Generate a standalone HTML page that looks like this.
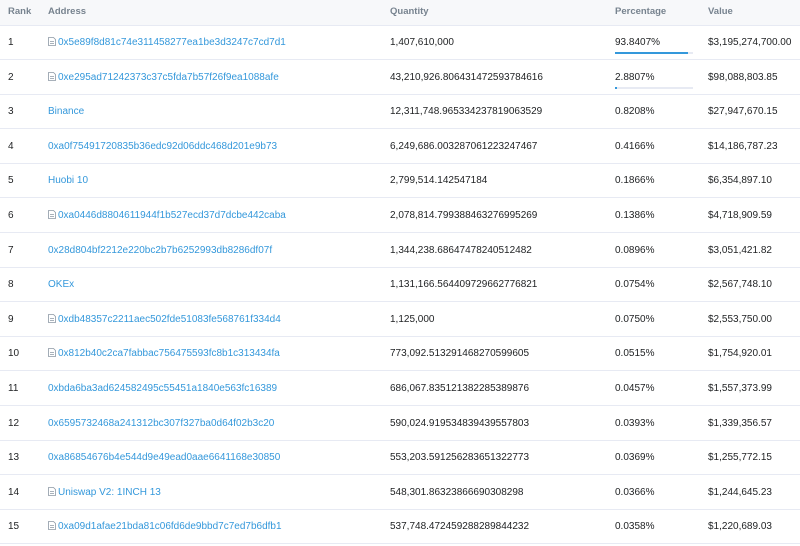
<!DOCTYPE html>
<html><head><meta charset="utf-8"><style>
body{margin:0;width:800px;height:546px;overflow:hidden;background:#fff;font-family:"Liberation Sans",Helvetica,Arial,sans-serif;font-size:10px;color:#1e2022;position:relative}
.hd{position:absolute;left:0;top:0;width:800px;height:25px;background:#f7f8fa;border-bottom:1px solid #e7eaf3}
.hd span{position:absolute;top:6px;font-weight:bold;color:#77838f;font-size:9.5px}
.r{position:absolute;left:0;width:800px;height:34px;border-bottom:1px solid #e7eaf3}
.r span{position:absolute;top:12px;white-space:nowrap}
a{color:#3498db;text-decoration:none}
.ic{display:inline-block;width:8px;height:9px;margin-right:2px;vertical-align:-1px}
.bar{position:absolute;left:615px;top:27px;width:78px;height:2px;background:#e7eaf3}
.bar i{display:block;height:2px;background:#3498db}
</style></head><body>
<svg width="0" height="0" style="position:absolute"><defs><symbol id="d" viewBox="0 0 8 9"><path d="M0.5 0.5H5.5L7.5 2.5V8.5H0.5Z" fill="none" stroke="#8c98a4" stroke-width="0.8"/><path d="M2 4.5H6M2 6.5H6" stroke="#8c98a4" stroke-width="0.7"/></symbol></defs></svg>
<div class="hd"><span style="left:8px">Rank</span><span style="left:48px">Address</span><span style="left:390px">Quantity</span><span style="left:615px">Percentage</span><span style="left:708px">Value</span></div>
<div class="r" style="top:25px"><span style="left:8px">1</span><span style="left:48px"><svg class="ic"><use href="#d"/></svg><a>0x5e89f8d81c74e311458277ea1be3d3247c7cd7d1</a></span><span style="left:390px">1,407,610,000</span><span style="left:615px">93.8407%</span><div class="bar"><i style="width:94%"></i></div><span style="left:708px">$3,195,274,700.00</span></div>
<div class="r" style="top:59.6px"><span style="left:8px">2</span><span style="left:48px"><svg class="ic"><use href="#d"/></svg><a>0xe295ad71242373c37c5fda7b57f26f9ea1088afe</a></span><span style="left:390px">43,210,926.806431472593784616</span><span style="left:615px">2.8807%</span><div class="bar"><i style="width:3%"></i></div><span style="left:708px">$98,088,803.85</span></div>
<div class="r" style="top:94.2px"><span style="left:8px">3</span><span style="left:48px"><a>Binance</a></span><span style="left:390px">12,311,748.965334237819063529</span><span style="left:615px">0.8208%</span><span style="left:708px">$27,947,670.15</span></div>
<div class="r" style="top:128.8px"><span style="left:8px">4</span><span style="left:48px"><a>0xa0f75491720835b36edc92d06ddc468d201e9b73</a></span><span style="left:390px">6,249,686.003287061223247467</span><span style="left:615px">0.4166%</span><span style="left:708px">$14,186,787.23</span></div>
<div class="r" style="top:163.4px"><span style="left:8px">5</span><span style="left:48px"><a>Huobi 10</a></span><span style="left:390px">2,799,514.142547184</span><span style="left:615px">0.1866%</span><span style="left:708px">$6,354,897.10</span></div>
<div class="r" style="top:198px"><span style="left:8px">6</span><span style="left:48px"><svg class="ic"><use href="#d"/></svg><a>0xa0446d8804611944f1b527ecd37d7dcbe442caba</a></span><span style="left:390px">2,078,814.799388463276995269</span><span style="left:615px">0.1386%</span><span style="left:708px">$4,718,909.59</span></div>
<div class="r" style="top:232.6px"><span style="left:8px">7</span><span style="left:48px"><a>0x28d804bf2212e220bc2b7b6252993db8286df07f</a></span><span style="left:390px">1,344,238.68647478240512482</span><span style="left:615px">0.0896%</span><span style="left:708px">$3,051,421.82</span></div>
<div class="r" style="top:267.2px"><span style="left:8px">8</span><span style="left:48px"><a>OKEx</a></span><span style="left:390px">1,131,166.564409729662776821</span><span style="left:615px">0.0754%</span><span style="left:708px">$2,567,748.10</span></div>
<div class="r" style="top:301.8px"><span style="left:8px">9</span><span style="left:48px"><svg class="ic"><use href="#d"/></svg><a>0xdb48357c2211aec502fde51083fe568761f334d4</a></span><span style="left:390px">1,125,000</span><span style="left:615px">0.0750%</span><span style="left:708px">$2,553,750.00</span></div>
<div class="r" style="top:336.4px"><span style="left:8px">10</span><span style="left:48px"><svg class="ic"><use href="#d"/></svg><a>0x812b40c2ca7fabbac756475593fc8b1c313434fa</a></span><span style="left:390px">773,092.513291468270599605</span><span style="left:615px">0.0515%</span><span style="left:708px">$1,754,920.01</span></div>
<div class="r" style="top:371px"><span style="left:8px">11</span><span style="left:48px"><a>0xbda6ba3ad624582495c55451a1840e563fc16389</a></span><span style="left:390px">686,067.835121382285389876</span><span style="left:615px">0.0457%</span><span style="left:708px">$1,557,373.99</span></div>
<div class="r" style="top:405.6px"><span style="left:8px">12</span><span style="left:48px"><a>0x6595732468a241312bc307f327ba0d64f02b3c20</a></span><span style="left:390px">590,024.919534839439557803</span><span style="left:615px">0.0393%</span><span style="left:708px">$1,339,356.57</span></div>
<div class="r" style="top:440.2px"><span style="left:8px">13</span><span style="left:48px"><a>0xa86854676b4e544d9e49ead0aae6641168e30850</a></span><span style="left:390px">553,203.591256283651322773</span><span style="left:615px">0.0369%</span><span style="left:708px">$1,255,772.15</span></div>
<div class="r" style="top:474.8px"><span style="left:8px">14</span><span style="left:48px"><svg class="ic"><use href="#d"/></svg><a>Uniswap V2: 1INCH 13</a></span><span style="left:390px">548,301.86323866690308298</span><span style="left:615px">0.0366%</span><span style="left:708px">$1,244,645.23</span></div>
<div class="r" style="top:509.4px"><span style="left:8px">15</span><span style="left:48px"><svg class="ic"><use href="#d"/></svg><a>0xa09d1afae21bda81c06fd6de9bbd7c7ed7b6dfb1</a></span><span style="left:390px">537,748.472459288289844232</span><span style="left:615px">0.0358%</span><span style="left:708px">$1,220,689.03</span></div>
</body></html>
